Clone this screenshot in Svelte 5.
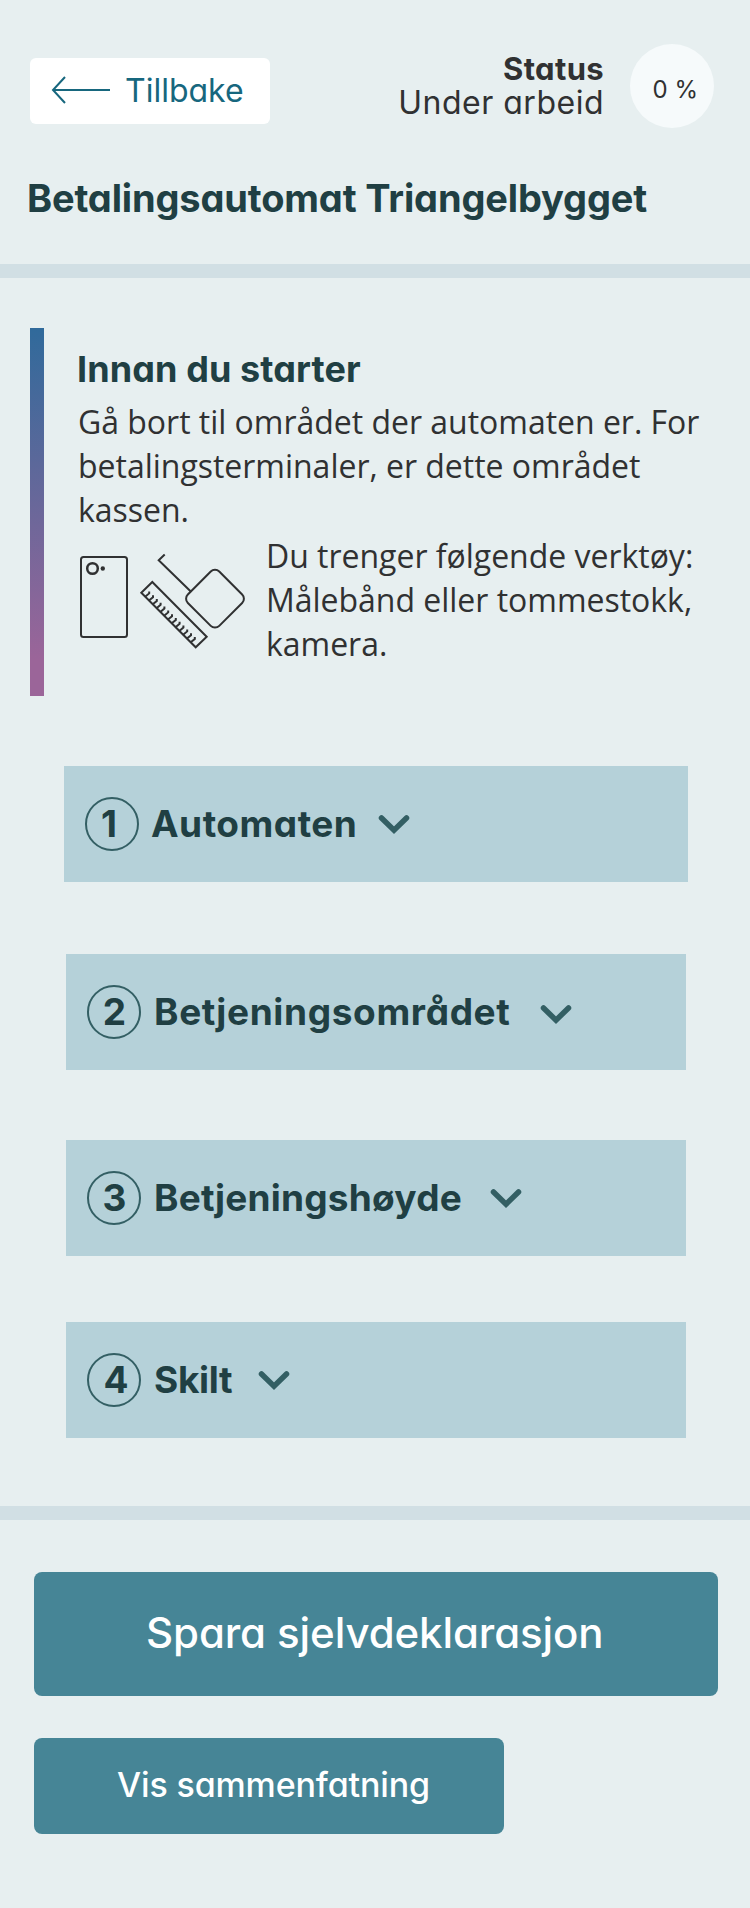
<script>
  const steps = [
    { n: 1, title: 'Automaten' },
    { n: 2, title: 'Betjeningsområdet' },
    { n: 3, title: 'Betjeningshøyde' },
    { n: 4, title: 'Skilt' }
  ];
  const ticks = Array.from({ length: 13 }, (_, i) => i);
</script>

<main>
  <header>
    <div class="top">
      <button class="back">
        <svg width="60" height="30" viewBox="0 0 60 30"><path d="M59 15H2M14 2L2 15L14 28" /></svg>
        <span>Tillbake</span>
      </button>
      <div class="status">
        <strong>Status</strong>
        <span>Under arbeid</span>
      </div>
      <div class="progress">0 %</div>
    </div>
    <h1>Betalingsautomat Triangelbygget</h1>
  </header>

  <section class="intro">
    <div class="content">
      <h2>Innan du starter</h2>
      <p>Gå bort til området der automaten er. For<br />betalingsterminaler, er dette området<br />kassen.</p>
      <div class="tools">
        <svg width="170" height="104" viewBox="0 0 170 104">
          <rect x="3" y="7" width="46" height="80" rx="2.5" />
          <circle class="lens" cx="14.5" cy="18.5" r="5.3" />
          <circle class="dot" cx="24.8" cy="18.5" r="2.2" />
          <path d="M86.7 4.5L80.7 10.3L113.3 42" />
          <rect x="114.8" y="26.5" width="44.4" height="44.4" rx="6" transform="rotate(45 137 48.7)" />
          <path d="M74.3 32L128.7 86.7L117.7 97.3L63.3 42.7Z" />
          {#each ticks as i}
            <path d="M{66.8 + i * 3.8} {47 + i * 3.8}l4.4-3.6v-2" />
          {/each}
        </svg>
        <p>Du trenger følgende verktøy:<br />Målebånd eller tommestokk,<br />kamera.</p>
      </div>
    </div>
  </section>

  <div class="steps">
    {#each steps as s}
      <button class="step step-{s.n}">
        <span class="num"><span>{s.n}</span></span>
        <span class="title">{s.title}</span>
        <svg width="32" height="22" viewBox="0 0 32 22"><path d="M3.5 4L16 16.2L28.5 4" /></svg>
      </button>
    {/each}
  </div>

  <footer>
    <button class="primary">Spara sjelvdeklarasjon</button>
    <button class="secondary">Vis sammenfatning</button>
  </footer>
</main>

<style>
  :global(body) { background: #e7eff0; }
  main { width: 750px; font-family: Inter, "Liberation Sans", sans-serif; font-feature-settings: "cv11"; color: #303132; white-space: nowrap; }
  main, main * { box-sizing: border-box; }
  button { border: 0; margin: 0; padding: 0; font: inherit; font-feature-settings: inherit; text-align: left; color: inherit; display: flex; align-items: center; }
  svg { display: block; flex: none; fill: none; }

  header { height: 278px; border-bottom: 14px solid #d1dfe4; padding: 44px 36px 0 27px; }
  .top { display: flex; align-items: flex-start; height: 84px; }
  .back { width: 240px; height: 66px; margin: 14px 0 0 3px; padding: 0 0 2px 21px; background: #fff; border-radius: 6px; color: #17677e; font-size: 32px; gap: 14px; }
  .back svg { stroke: #17677e; stroke-width: 2; }
  .status { margin: 8px 26px 0 auto; display: flex; flex-direction: column; align-items: flex-end; font-size: 32px; line-height: 34px; letter-spacing: 0.5px; }
  .status strong { font-size: 31px; font-weight: 700; letter-spacing: 0.35px; }
  .progress { width: 84px; height: 84px; border-radius: 50%; background: #f6fafb; display: flex; align-items: center; justify-content: center; padding: 6px 0 0 5px; font-size: 24px; letter-spacing: -1.5px; word-spacing: 3px; }
  h1 { margin: 47px 0 0; font-size: 38px; line-height: 46px; font-weight: 700; letter-spacing: -0.15px; color: #203f43; }

  .intro { margin: 50px 30px 0; display: flex; height: 368px; }
  .intro::before { content: ""; width: 14px; background: linear-gradient(#306a9b, #9b6599 90%); }
  .content { padding: 19px 0 0 34px; }
  h2 { margin: 0 0 9px -1px; font-size: 36px; line-height: 44px; font-weight: 700; letter-spacing: 0.1px; color: #203f43; }
  p { margin: 0; font: 32px/44px "Open Sans", sans-serif; letter-spacing: -0.02px; }
  .tools { display: flex; align-items: flex-start; margin-top: 2px; }
  .tools svg { margin: 16px 18px 0 0; stroke: #303132; stroke-width: 2; }
  .tools .lens { stroke-width: 2.5; }
  .tools .dot { fill: #303132; stroke: none; }

  .steps { display: flex; flex-direction: column; margin: 70px 64px 68px 66px; }
  .step { height: 116px; background: #b5d1d9; color: #203f43; font-size: 37px; font-weight: 700; padding-left: 21px; }
  .step svg { stroke: #335f64; stroke-width: 5.5; stroke-linecap: round; }
  .title { padding-bottom: 2px; }
  .num { width: 54px; height: 54px; margin-right: 13px; border: 2px solid #335f64; border-radius: 50%; display: flex; align-items: center; justify-content: center; padding: 0 0 2px 1px; }
  .step-1 { margin: 0 -2px 72px; }
  .step-1 .num { padding: 0 6px 2px 0; margin-right: 12px; }
  .step-1 .title { letter-spacing: 0.5px; }
  .step-1 svg { margin: 1px 0 0 21px; }
  .step-2 { margin-bottom: 70px; }
  .step-2 .title { letter-spacing: 0.65px; }
  .step-2 svg { margin: 6px 0 0 29px; }
  .step-3 { margin-bottom: 66px; }
  .step-3 .title { letter-spacing: 0.22px; }
  .step-3 svg { margin: 2px 0 0 28px; }
  .step-4 .num { padding-left: 4px; }
  .step-4 .title { letter-spacing: -0.3px; }
  .step-4 svg { margin: 1px 0 0 26px; }

  footer { border-top: 14px solid #d1dfe4; padding: 52px 32px 74px 34px; }
  .primary, .secondary { background: #468596; color: #fff; border-radius: 8px; font-weight: 500; }
  .primary { width: 684px; height: 124px; padding: 0 0 3px 112px; font-size: 42px; letter-spacing: -0.1px; }
  .secondary { width: 470px; height: 96px; margin-top: 42px; padding: 0 0 4px 83px; font-size: 34px; letter-spacing: -0.14px; }
</style>
